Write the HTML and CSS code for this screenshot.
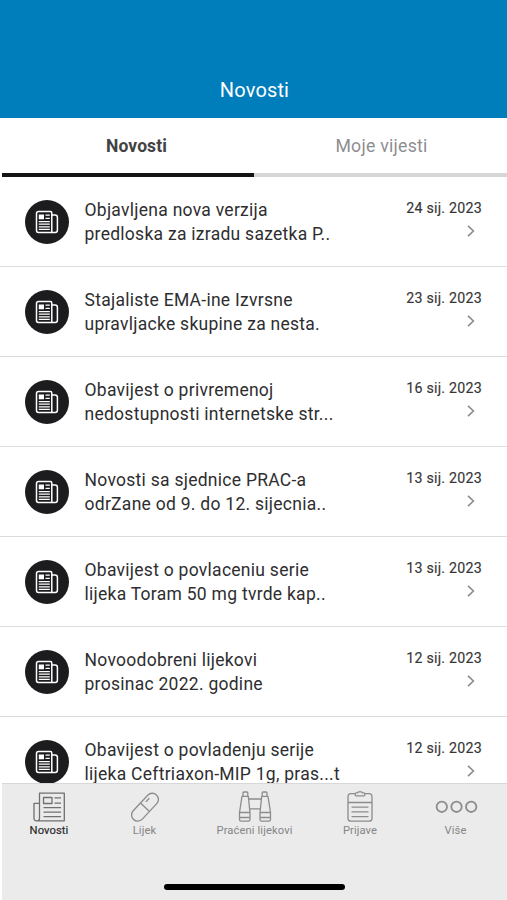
FILE: index.html
```
<!DOCTYPE html>
<html lang="hr">
<head>
<meta charset="utf-8">
<title>Novosti</title>
<link rel="stylesheet" href="styles.css">
</head>
<body>
<svg class="defs" width="0" height="0">
  <symbol id="news" viewBox="0 0 24 24">
    <g fill="none" stroke="currentColor" stroke-width="1.5" stroke-linejoin="round">
      <path d="M3.600 1.500h11.800q1.400 0 1.400 1.400V22.500H3.400q-1.900 0-1.900-1.900V3.600q0-2.100 2.100-2.100z"/>
      <path d="M16.800 5h3.300q2.300 0 2.300 2.300v13q0 2.200-2.200 2.200h-3.400"/>
      <path d="M3.800 11.600h11M3.800 14.200h11M3.800 16.800h11M3.800 19.400h11M10.500 5.200h4.300M10.500 8.400h4.300" stroke-width="1.300"/>
    </g>
    <path d="M3.800 4.500h5.200v4.800H3.800z" fill="currentColor"/>
  </symbol>
  <symbol id="chevron" viewBox="0 0 8 12">
    <path d="M1 .8L6.400 6 1 11.200" fill="none" stroke="currentColor" stroke-width="1.600"/>
  </symbol>
</svg>
<div class="screen">
  <header class="header"><h1>Novosti</h1></header>
  <nav class="tabs">
    <div class="tab tab-active"><span>Novosti</span></div>
    <div class="tab"><span>Moje vijesti</span></div>
  </nav>
  <main class="list">
    <article class="row">
      <div class="badge"><svg><use href="#news"/></svg></div>
      <p class="title">Objavljena nova verzija<br>predloska za izradu sazetka P..</p>
      <div class="meta"><time>24 sij. 2023</time><svg><use href="#chevron"/></svg></div>
    </article>
    <article class="row">
      <div class="badge"><svg><use href="#news"/></svg></div>
      <p class="title">Stajaliste EMA-ine Izvrsne<br>upravljacke skupine za nesta.</p>
      <div class="meta"><time>23 sij. 2023</time><svg><use href="#chevron"/></svg></div>
    </article>
    <article class="row">
      <div class="badge"><svg><use href="#news"/></svg></div>
      <p class="title">Obavijest o privremenoj<br>nedostupnosti internetske str...</p>
      <div class="meta"><time>16 sij. 2023</time><svg><use href="#chevron"/></svg></div>
    </article>
    <article class="row">
      <div class="badge"><svg><use href="#news"/></svg></div>
      <p class="title">Novosti sa sjednice PRAC-a<br>odrZane od 9. do 12. sijecnia..</p>
      <div class="meta"><time>13 sij. 2023</time><svg><use href="#chevron"/></svg></div>
    </article>
    <article class="row">
      <div class="badge"><svg><use href="#news"/></svg></div>
      <p class="title">Obavijest o povlaceniu serie<br>lijeka Toram 50 mg tvrde kap..</p>
      <div class="meta"><time>13 sij. 2023</time><svg><use href="#chevron"/></svg></div>
    </article>
    <article class="row">
      <div class="badge"><svg><use href="#news"/></svg></div>
      <p class="title">Novoodobreni lijekovi<br>prosinac 2022. godine</p>
      <div class="meta"><time>12 sij. 2023</time><svg><use href="#chevron"/></svg></div>
    </article>
    <article class="row">
      <div class="badge"><svg><use href="#news"/></svg></div>
      <p class="title">Obavijest o povladenju serije<br>lijeka Ceftriaxon-MIP 1g, pras...t</p>
      <div class="meta"><time>12 sij. 2023</time><svg><use href="#chevron"/></svg></div>
    </article>
  </main>
  <footer class="dock">
    <nav class="dock-items">
      <div class="item item-active">
        <svg width="32" height="32" viewBox="0 0 32 32">
          <path d="M6.500 1.200h24.800v27.600H3.600q-2.600 0-2.600-2.600V11.400h5.500zM6.500 11.400v14.800q0 2.600-2.400 2.600"/>
          <path d="M10.500 5.500h8.500v6h-8.500zM21.500 5.800H28M21.500 11.200H28M10.500 15.700H28M10.500 20.200H28M10.500 24.700H28"/>
        </svg>
        <span>Novosti</span>
      </div>
      <div class="item">
        <svg width="32" height="32" viewBox="0 0 32 32">
          <g transform="rotate(-47 16 15.200)"><rect x="-.8" y="9" width="33.600" height="12.400" rx="6.200"/><path d="M16 9v12.400M20.500 12.200h5"/></g>
        </svg>
        <span>Lijek</span>
      </div>
      <div class="item">
        <svg width="34" height="32" viewBox="0 0 34 32">
          <path d="M4 4.300L1.500 20.500v7q0 1.700 1.700 1.700h7.100q1.700 0 1.700-1.700v-7L10.300 4.300zM5 4.300V.9q0-.9.900-.9h3q.9 0 .9.900v3.400M1.500 20.500H12M1.500 25.500H12"/>
          <path d="M23.700 4.300L22 20.500v7q0 1.700 1.700 1.700h7.100q1.700 0 1.700-1.700v-7L30 4.300zM24.200 4.300V.9q0-.9.900-.9h3q.9 0 .9.900v3.400M22 20.500h10.500M22 25.500h10.500"/>
          <path d="M10.900 7h12.500M11.700 16.800h10.600"/>
        </svg>
        <span>Praćeni lijekovi</span>
      </div>
      <div class="item">
        <svg width="26" height="32" viewBox="0 0 26 32">
          <path d="M8 1.700H4q-3 0-3 3v21.500q0 3 3 3h18q3 0 3-3V4.700q0-3-3-3h-4"/>
          <path d="M9.200.8h1.300l.8-1h3.400l.8 1h1.300q1 0 1 1v1q0 1-1 1H9.200q-1 0-1-1v-1q0-1 1-1zM1 10.500h24M4.500 15.200h17M4.500 19.900h17M4.500 24.600h17"/>
        </svg>
        <span>Prijave</span>
      </div>
      <div class="item">
        <svg class="dots" width="42" height="32" viewBox="0 0 42 32">
          <circle cx="6.800" cy="14.800" r="5.200"/><circle cx="21.500" cy="14.800" r="5.200"/><circle cx="36.200" cy="14.800" r="5.200"/>
        </svg>
        <span>Više</span>
      </div>
    </nav>
    <div class="home-bar"></div>
  </footer>
</div>
</body>
</html>
```

FILE: styles.css
```
* { box-sizing: border-box; }

body {
  margin: 0;
  background: #fff;
  font-family: Roboto, "Liberation Sans", sans-serif;
}

.defs { display: block; }

.screen {
  display: flex;
  flex-direction: column;
  height: 900px;
  overflow: hidden;
}

.header {
  flex: none;
  display: flex;
  align-items: flex-end;
  justify-content: center;
  height: 118px;
  padding: 0 0 16px 2px;
  background: #007dbb;
  color: #fff;
}

.header h1 {
  margin: 0;
  font-size: 20px;
  line-height: 24px;
  font-weight: 400;
  letter-spacing: 0.15px;
}

.tabs {
  flex: none;
  display: grid;
  grid-template-columns: 252px 253px;
  height: 59px;
  padding-left: 2px;
}

.tab {
  display: flex;
  justify-content: center;
  padding: 16px 0 0 2px;
  border-bottom: 4px solid #d6d6d6;
  font-size: 17.7px;
  line-height: 24px;
  letter-spacing: 0.25px;
  color: #8e8e90;
}

.tab-active {
  padding-left: 17px;
  border-color: #141416;
  color: #424244;
  font-size: 17.5px;
  letter-spacing: 0.1px;
  font-weight: 700;
}

.list {
  flex: 1;
  min-height: 0;
  overflow: hidden;
}

.row {
  display: flex;
  height: 90px;
  padding: 0 25px 0 24.5px;
  border-bottom: 1px solid #dcdcdc;
}

.badge {
  flex: none;
  display: flex;
  align-items: center;
  justify-content: center;
  width: 44px;
  height: 44px;
  margin-top: 23px;
  border-radius: 50%;
  background: #1c1c1e;
  color: #fff;
}

.badge svg { width: 24px; height: 24px; }

.title {
  flex: 1;
  margin: 21px 0 0 16px;
  white-space: nowrap;
  font-size: 17.5px;
  line-height: 24.4px;
  letter-spacing: 0.27px;
  color: #2e2e30;
}

.meta {
  display: flex;
  flex-direction: column;
  align-items: flex-end;
  padding-top: 21px;
  font-size: 14.2px;
  line-height: 20px;
  letter-spacing: 0.25px;
  color: #363638;
  -webkit-text-stroke: 0.15px #363638;
}

.meta svg {
  width: 8px;
  height: 12px;
  margin: 6.500px 7px 0 0;
  color: #8c8c8e;
}

.dock {
  flex: none;
  display: flex;
  flex-direction: column;
  justify-content: space-between;
  align-items: center;
  height: 117px;
  margin-left: 2px;
  padding: 8px 0 10px;
  border-top: 1px solid #d8d8d8;
  background: #ebebeb;
}

.dock-items {
  display: grid;
  grid-template-columns: 94px 97px 123px 88px 103px;
  width: 505px;
}

.item {
  display: flex;
  flex-direction: column;
  align-items: center;
  font-size: 11.2px;
  line-height: 14px;
  letter-spacing: 0.1px;
  white-space: nowrap;
  color: #858587;
}

.item-active {
  color: #2a2a2c;
  -webkit-text-stroke: 0.2px #2a2a2c;
}

.item svg {
  overflow: visible;
  fill: none;
  stroke: #8c8c8e;
  stroke-width: 1.3;
  stroke-linejoin: round;
}

.item-active svg { stroke: #707072; }

.item .dots { stroke-width: 1.8; }

.home-bar {
  width: 181px;
  height: 6px;
  border-radius: 3px;
  background: #000;
}
```
